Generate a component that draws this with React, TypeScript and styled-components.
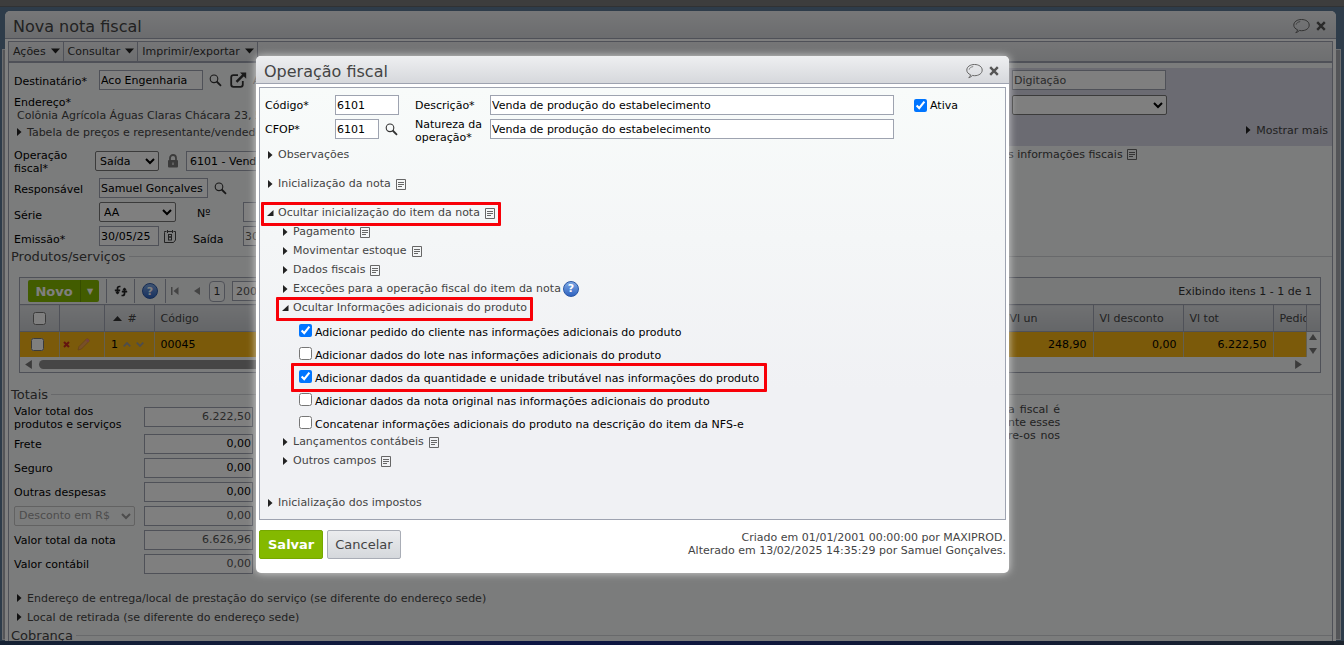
import React from 'react';
import styled, { createGlobalStyle, css } from 'styled-components';

const Global = createGlobalStyle`
  *, *::before, *::after { box-sizing: border-box; }
  html, body, #root { height: 100%; margin: 0; }
  body {
    overflow: hidden;
    font: 11px/13px "DejaVu Sans", Verdana, sans-serif;
    color: #000;
  }
  button, input, select { font: inherit; color: inherit; margin: 0; }
  button { cursor: pointer; }
`;

const edge = '#9ea3b0';

/* ---------- desktop and windows ---------- */

const Desktop = styled.div`
  position: relative;
  display: grid;
  grid-template-rows: 7px minmax(0, 1fr) 4px;
  height: 100vh;
  overflow: hidden;
  background: #5c7894;
`;

const TopStrip = styled.div`
  background: #7a7a7a;
  border-bottom: 1px solid #606468;
`;

const BottomStrip = styled.div`
  background: linear-gradient(90deg, #2c4468, #1c2c88 40%, #22346c 70%, #38485c);
`;

const BackWindow = styled.div`
  position: absolute;
  inset: 49px 3px 5px 2px;
  border: 1px solid #d8dade;
  background: #a8aab0;
`;

const Stage = styled.div`
  padding: 4px 8px 0 5px;
  min-height: 0;
`;

const WindowFrame = styled.section`
  position: relative;
  display: flex;
  flex-direction: column;
  background: #fff;
  border-radius: 5px 5px 0 0;
  height: 100%;
  overflow: hidden;
  padding: 0 3px;
`;

const TitleBar = styled.header`
  display: flex;
  align-items: center;
  gap: 6px;
  flex: none;
  height: 28px;
  margin: 0 -3px 2px;
  padding: 2px 10px 0 8px;
  border-bottom: 1px solid ${edge};
  border-radius: 5px 5px 0 0;
  background: linear-gradient(#eeeff1, #d6d8dc);
`;

const Title = styled.h1`
  flex: 1;
  margin: 0;
  padding-top: 3px;
  font-size: 16px;
  line-height: 20px;
  font-weight: 400;
  color: #444;
`;

const IconButton = styled.button`
  display: inline-flex;
  align-items: center;
  justify-content: center;
  flex: none;
  padding: 0;
  border: 0;
  background: none;
`;

const MainPanel = styled.div`
  flex: 1;
  min-height: 0;
  overflow: hidden;
  border: 1px solid ${edge};
  border-bottom: 0;
  background: #f7f8f8;
`;

/* ---------- menu bar ---------- */

const MenuBar = styled.nav`
  display: flex;
  height: 21px;
  border-bottom: 2px solid ${edge};
  background: linear-gradient(#ebecee, #dcdee1);
`;

const MenuButton = styled.button`
  display: flex;
  align-items: center;
  gap: 5px;
  padding: 0 3px 0 4px;
  border: 0;
  border-right: 1px solid ${edge};
  background: none;
  color: #333;
  svg { margin-bottom: 2px; }
`;

/* ---------- form parts ---------- */

const field = css`
  height: 20px;
  border: 1px solid ${edge};
  background: #fff;
  padding: 0 1px;
`;

const TextField = styled.input<{ $w?: number; $right?: boolean; $muted?: boolean; $pad?: number }>`
  ${field}
  flex: none;
  width: ${p => (p.$w ? `${p.$w}px` : '100%')};
  padding: 0 ${p => p.$pad ?? 1}px;
  text-align: ${p => (p.$right ? 'right' : 'left')};
  color: ${p => (p.$muted ? '#555' : '#000')};
`;

const Select = styled.select<{ $w: number }>`
  flex: none;
  width: ${p => p.$w}px;
  height: 20px;
  padding: 0;
  border: 1px solid #767676;
  border-radius: 2px;
  background-color: #fff;
  &:disabled { opacity: 1; color: #9a9a9a; border-color: #c4c4c4; background-color: #f7f8f8; }
`;

const FormArea = styled.div`
  display: flex;
  justify-content: space-between;
  padding-top: 5px;
`;

const FormColumn = styled.div`
  flex: 1;
  min-width: 0;
  padding-left: 5px;
`;

const Row = styled.div<{ $before?: number; $after?: number }>`
  display: flex;
  align-items: center;
  height: 24px;
  margin-top: ${p => p.$before ?? 0}px;
  margin-bottom: ${p => p.$after ?? 0}px;
`;

const Label = styled.label<{ $w: number; $low?: boolean }>`
  flex: none;
  width: ${p => p.$w}px;
  padding-top: ${p => (p.$low ? 6 : 2)}px;
`;

const Gap = styled.span<{ $w: number }>`
  flex: none;
  display: inline-flex;
  align-items: center;
  justify-content: center;
  width: ${p => p.$w}px;
`;

const FadedLink = styled.a`
  padding-left: 4px;
  color: #8a8a8a;
  text-decoration: none;
`;

const Address = styled.p`
  margin: 0;
  padding-left: 3px;
  color: #444;
  white-space: nowrap;
`;

const FieldTitle = styled.p`
  margin: 4px 0 0;
`;

const Disclosure = styled.button<{ $indent?: number; $before?: number; $h?: number; $mark?: boolean; $padRight?: number }>`
  position: relative;
  display: flex;
  align-items: center;
  width: fit-content;
  height: ${p => p.$h ?? 19}px;
  margin: ${p => p.$before ?? 0}px 0 0 ${p => p.$indent ?? 0}px;
  padding: 0 ${p => p.$padRight ?? 0}px 0 0;
  border: 0;
  background: none;
  color: #444;
  white-space: nowrap;
  ${p => p.$mark && css`
    &::after {
      content: "";
      position: absolute;
      inset: -1px 0 -4px -6px;
      border: 3px solid #f80008;
      border-radius: 1px;
    }
  `}
`;

const StatusPanel = styled.aside`
  display: flex;
  flex-direction: column;
  width: 324px;
  flex: none;
`;

const StatusBox = styled.div`
  display: flex;
  flex-direction: column;
  gap: 5px;
  height: 78px;
  padding: 2px 4px;
  background: #d6d6e4;
`;

const PushRight = styled.div`
  align-self: flex-end;
`;

const FiscalNote = styled.p`
  display: flex;
  align-items: center;
  gap: 4px;
  margin: 2px 0 0;
  color: #444;
`;

const Legend = styled.h2<{ $before: number }>`
  display: flex;
  align-items: center;
  gap: 3px;
  height: 15px;
  margin: ${p => p.$before}px 0 0;
  padding-left: 2px;
  font-size: 13px;
  line-height: 15px;
  font-weight: 400;
  color: #444;
  &::after { content: ""; flex: 1; height: 1px; background: #d0d2d6; }
`;

/* ---------- item grid ---------- */

const GridBox = styled.div`
  margin: 13px 11px 0 10px;
  border: 1px solid ${edge};
`;

const GridTools = styled.div`
  display: flex;
  align-items: center;
  height: 26px;
  padding: 0 8px;
  color: #333;
  background: #f1f2f3;
`;

const GreenSplit = styled.div`
  display: flex;
  height: 22px;
  border-radius: 2px;
  background: #84b800;
  color: #fff;
`;

const SplitPart = styled.button<{ $w: number }>`
  display: flex;
  align-items: center;
  justify-content: center;
  width: ${p => p.$w}px;
  padding: 0;
  border: 0;
  background: none;
  font-size: 13px;
  font-weight: 700;
  & + & { border-left: 1px solid #6d9a00; font-size: 8px; }
`;

const ToolCell = styled.span<{ $w: number; $line?: boolean }>`
  display: flex;
  align-items: center;
  justify-content: center;
  width: ${p => p.$w}px;
  height: 24px;
  border-right: ${p => (p.$line ? `1px solid ${edge}` : '0')};
`;

const PageButton = styled.button`
  width: 16px;
  height: 21px;
  margin-right: 7px;
  padding: 0;
  border: 1px solid ${edge};
  border-radius: 4px;
  background: #f7f8f8;
`;

const GridCount = styled.span`
  margin-left: auto;
`;

const Table = styled.table`
  width: 100%;
  table-layout: fixed;
  border-collapse: collapse;
`;

const Th = styled.th`
  height: 27px;
  padding: 0 0 0 6px;
  border: solid ${edge};
  border-width: 1px 1px 1px 0;
  background: linear-gradient(#e0e2e5, #c9ccd0);
  font-weight: 400;
  text-align: left;
  color: #444;
  white-space: nowrap;
  overflow: hidden;
  &:last-child { border-right: 0; }
`;

const Td = styled.td<{ $right?: boolean; $tight?: boolean }>`
  height: 25px;
  padding: 0 6px 0 ${p => (p.$tight ? 3 : 6)}px;
  border-right: 1px solid #c8c0a0;
  background: #f6b414;
  text-align: ${p => (p.$right ? 'right' : 'left')};
  white-space: nowrap;
`;

const ScrollCell = styled.td`
  padding: 0;
  background: #f7f8f8;
`;

const ScrollArrows = styled.div`
  display: flex;
  flex-direction: column;
  align-items: center;
  gap: 6px;
`;

const CellTools = styled.div<{ $gap: number }>`
  display: flex;
  align-items: center;
  gap: ${p => p.$gap}px;
`;

const ScrollTrack = styled.div`
  display: flex;
  align-items: center;
  gap: 6px;
  height: 15px;
  padding: 0 17px 0 4px;
`;

const ScrollThumb = styled.div`
  width: 70%;
  height: 9px;
  margin-right: auto;
  border-radius: 5px;
  background: #8c8c8c;
`;

const Check = styled.input.attrs({ type: 'checkbox' })`
  flex: none;
  width: 13px;
  height: 13px;
`;

/* ---------- totals ---------- */

const TotalsArea = styled.div`
  display: flex;
  justify-content: space-between;
  padding: 1px 272px 0 5px;
`;

const HelpText = styled.p`
  width: 52px;
  margin: 0;
  color: #444;
  text-align: justify;
  text-align-last: justify;
`;

const Line = styled.span`
  display: block;
  white-space: nowrap;
`;

/* ---------- dialog ---------- */

const Overlay = styled.div`
  position: absolute;
  inset: 0;
  padding: 56px 335px 0 256px;
  background: rgba(0, 0, 0, 0.5);
`;

const Dialog = styled.section`
  padding: 0 3px 14px;
  border-radius: 5px;
  background: #fff;
  box-shadow: 0 0 8px rgba(255, 255, 255, 0.7);
`;

const DialogPanel = styled.div`
  margin-top: 3px;
  height: 433px;
  padding: 5px 5px 0 7px;
  border: 1px solid ${edge};
  background: linear-gradient(#f8fbfa, #f0f1f4 70%);
`;

const DialogFields = styled.div`
  display: grid;
  grid-template-columns: 70px 80px 75px minmax(0, 404px) 1fr;
  grid-template-rows: 24px 24px;
  align-items: center;
  margin: 0 0 4px -2px;
`;

const TwoLineLabel = styled.label`
  padding-top: 4px;
`;

const Inline = styled.div`
  display: flex;
  align-items: center;
  gap: 6px;
`;

const CheckLabel = styled.label<{ $mark?: boolean }>`
  position: relative;
  display: flex;
  align-items: center;
  gap: 3px;
  width: fit-content;
  height: 23px;
  margin-left: 32px;
  padding-top: 7px;
  white-space: nowrap;
  ${Check} { margin-bottom: 4px; }
  ${p => p.$mark && css`
    &::after {
      content: "";
      position: absolute;
      inset: 0 -8px -6px -8px;
      border: 3px solid #f80008;
      border-radius: 1px;
    }
  `}
`;

const ActiveLabel = styled.label`
  display: flex;
  align-items: center;
  gap: 3px;
  padding-left: 20px;
`;

const DialogFooter = styled.footer`
  display: flex;
  align-items: flex-start;
  gap: 4px;
  padding-top: 10px;
`;

const ActionButton = styled.button<{ $primary?: boolean }>`
  height: 29px;
  padding: 0 ${p => (p.$primary ? 8 : 7)}px;
  border: 1px solid ${p => (p.$primary ? '#76a800' : '#a9adb6')};
  border-radius: 2px;
  background: ${p => (p.$primary ? '#84b900' : 'linear-gradient(#ebecee, #d5d8dc)')};
  color: ${p => (p.$primary ? '#fff' : '#444')};
  font-size: 13px;
  font-weight: ${p => (p.$primary ? 700 : 400)};
`;

const Audit = styled.p`
  margin: 1px 0 0 auto;
  color: #444;
  text-align: right;
`;

/* ---------- icons ---------- */

const Bubble = () => (
  <svg width="17" height="16" viewBox="0 0 17 16" fill="none" stroke="#666" strokeWidth="1">
    <path d="M4.600 11.800C2.300 10.900.800 9.200.800 7.100.800 3.700 4.200 1.500 8.500 1.500s7.700 2.200 7.700 5.600-3.400 5.600-7.700 5.600c-.8 0-1.500-.1-2.200-.2-.8 1-2 1.800-3.500 2.200.9-.8 1.500-1.600 1.800-2.900z" />
    <path d="M3.200 6.600c.2-1.500 1.700-2.700 4-3" strokeWidth=".8" />
  </svg>
);

const Close = () => (
  <svg width="10" height="10" viewBox="0 0 10 10" stroke="#555" strokeWidth="2.400">
    <path d="M1.200 1.200l7.600 7.600M8.800 1.200L1.200 8.800" />
  </svg>
);

const Caret = () => (
  <svg width="9" height="6" viewBox="0 0 9 6"><path d="M0 .500h9L4.500 5.500z" fill="#222" /></svg>
);

const Doc = () => (
  <svg width="10" height="11" viewBox="0 0 10 11" fill="none" stroke="#666">
    <path d="M.5.500h9v10h-9zM2 3.500h6M2 5.500h6M2 7.500h4" />
  </svg>
);

const Lens = () => (
  <svg width="13" height="13" viewBox="0 0 13 13" fill="none" stroke="#333">
    <circle cx="5" cy="4.800" r="3.800" strokeWidth="1.100" />
    <path d="M7.700 7.500l4.300 4.300" strokeWidth="1.800" />
  </svg>
);

const External = () => (
  <svg width="17" height="16" viewBox="0 0 17 16" fill="none" stroke="#333" strokeWidth="2">
    <path d="M8 3.200H3.500Q1.200 3.200 1.200 5.500v7Q1.200 14.800 3.500 14.800h7q2.300 0 2.300-2.300V9" strokeWidth="1.800" />
    <path d="M6.500 9.800L14 2.300" strokeWidth="2.400" />
    <path d="M10 .500h6.200v6.200z" fill="#333" stroke="none" />
  </svg>
);

const Lock = () => (
  <svg width="12" height="14" viewBox="0 0 12 14">
    <path d="M3 6V4a3 3 0 0 1 6 0v2" fill="none" stroke="#777" strokeWidth="1.800" />
    <rect x="1" y="6" width="10" height="7.500" rx="1" fill="#777" />
    <path d="M6 8.500v2.500" stroke="#ddd" strokeWidth="1.400" />
  </svg>
);

const Calendar = () => (
  <svg width="12" height="13" viewBox="0 0 12 13" fill="none" stroke="#444">
    <path d="M.5 2.500v-1h2M4 1.500h4M9.500 1.500h2v8.500l-2 2.500h-9v-10M3.500 0v3M8.500 0v3" />
    <rect x="4.500" y="4.500" width="3" height="2.500" />
    <rect x="4.500" y="7" width="3" height="3" />
  </svg>
);

const Refresh = () => (
  <svg width="14" height="12" viewBox="0 0 14 12" fill="none" stroke="#222" strokeWidth="1.700">
    <path d="M6.500 1.500H5.500q-2 0-2 2V9M7.500 10.500h1q2 0 2-2V3" />
    <path d="M.8 5.200h5.400M7.800 6.800h5.400" strokeWidth="1.400" />
    <path d="M1 6.500h5L3.500 9.500zM8 5.500h5l-2.500-3z" fill="#222" stroke="none" />
  </svg>
);

const HelpDot = styled.span`
  display: inline-flex;
  align-items: center;
  justify-content: center;
  width: 16px;
  height: 16px;
  border-radius: 50%;
  border: 1px solid #2a57a5;
  background: linear-gradient(#7ea8e4, #2f63c0);
  color: #fff;
  font-weight: 700;
`;

const Arrow = ({ dir, color = '#333', size = 8 }: { dir: 'up' | 'down' | 'left' | 'right'; color?: string; size?: number }) => {
  const d = { up: 'M4 1l4 6H0z', down: 'M0 1h8L4 7z', left: 'M7 0v8L1 4z', right: 'M1 0v8l6-4z' }[dir];
  return <svg width={size} height={size} viewBox="0 0 8 8"><path d={d} fill={color} /></svg>;
};

const SortArrow = () => (
  <svg width="9" height="5" viewBox="0 0 9 5"><path d="M4.500 0L9 5H0z" fill="#333" /></svg>
);

const FirstPage = () => (
  <svg width="8" height="8" viewBox="0 0 8 8" fill="#888"><path d="M0 0h1.500v8H0zM7.500 0v8L2.500 4z" /></svg>
);

const RowCross = () => (
  <svg width="7" height="7" viewBox="0 0 7 7" stroke="#c8281e" strokeWidth="2"><path d="M1 1l5 5M6 1L1 6" /></svg>
);

const Pencil = () => (
  <svg width="13" height="13" viewBox="0 0 13 13">
    <path d="M1 12l1-3.500 7.500-7.500q1-.6 2 .400t.4 2L4.400 11z" fill="#f0a050" stroke="#c07830" strokeWidth=".6" />
    <path d="M9.500 1q1-.6 2 .400t.4 2l-1 1-2.400-2.400z" fill="#e88080" />
  </svg>
);

const Chevron = ({ up }: { up?: boolean }) => (
  <svg width="8" height="5" viewBox="0 0 8 5" fill="none" stroke="#9a9a9a" strokeWidth="1.800">
    <path d={up ? 'M.7 4.300L4 1l3.300 3.300' : 'M.7.700L4 4l3.300-3.300'} />
  </svg>
);

const MarkSlot = styled.span`
  display: inline-flex;
  flex: none;
  width: 11px;
`;

const DocSlot = styled.span`
  display: inline-flex;
  padding: 2px 0 0 5px;
`;

const HelpSlot = styled.span`
  display: inline-flex;
  padding-left: 2px;
`;

const Marker = ({ open }: { open?: boolean }) => (
  <MarkSlot>
    <svg width="7" height="8" viewBox="0 0 7 8" fill="#222">
      <path d={open ? 'M6.500 1v6H0z' : 'M1 0l4.500 4L1 8z'} />
    </svg>
  </MarkSlot>
);

type ItemProps = {
  text: string; open?: boolean; doc?: boolean; help?: boolean;
  indent?: number; before?: number; mark?: boolean; padRight?: number;
};

const Item = ({ text, open, doc, help, indent, before, mark, padRight }: ItemProps) => (
  <Disclosure type="button" aria-expanded={!!open} $indent={indent} $before={before} $mark={mark} $padRight={padRight}>
    <Marker open={open} />
    {text}
    {doc && <DocSlot><Doc /></DocSlot>}
    {help && <HelpSlot><HelpDot>?</HelpDot></HelpSlot>}
  </Disclosure>
);

const totals = [
  { id: 'frete', label: 'Frete', value: '0,00' },
  { id: 'seguro', label: 'Seguro', value: '0,00' },
  { id: 'outras', label: 'Outras despesas', value: '0,00' },
  { id: 'desconto', label: '', value: '0,00', muted: true },
  { id: 'total', label: 'Valor total da nota', value: '6.626,96', muted: true },
  { id: 'contabil', label: 'Valor contábil', value: '0,00', muted: true },
];

const options = [
  { text: 'Adicionar pedido do cliente nas informações adicionais do produto', on: true },
  { text: 'Adicionar dados do lote nas informações adicionais do produto', on: false },
  { text: 'Adicionar dados da quantidade e unidade tributável nas informações do produto', on: true, mark: true },
  { text: 'Adicionar dados da nota original nas informações adicionais do produto', on: false },
  { text: 'Concatenar informações adicionais do produto na descrição do item da NFS-e', on: false },
];

const InvoiceWindow = () => (
  <WindowFrame>
    <TitleBar>
      <Title>Nova nota fiscal</Title>
      <IconButton aria-label="Comentários"><Bubble /></IconButton>
      <IconButton aria-label="Fechar"><Close /></IconButton>
    </TitleBar>
    <MainPanel>
      <MenuBar>
        <MenuButton>Ações <Caret /></MenuButton>
        <MenuButton>Consultar <Caret /></MenuButton>
        <MenuButton>Imprimir/exportar <Caret /></MenuButton>
      </MenuBar>
      <FormArea>
        <FormColumn>
          <Row>
            <Label htmlFor="dest" $w={85}>Destinatário*</Label>
            <TextField id="dest" $w={104} defaultValue="Aco Engenharia" />
            <Gap $w={24}><Lens /></Gap>
            <Gap $w={22}><External /></Gap>
            <FadedLink href="#abrir">A</FadedLink>
          </Row>
          <FieldTitle>Endereço*</FieldTitle>
          <Address>Colônia Agrícola Águas Claras Chácara 23, 5</Address>
          <Disclosure $indent={2} $h={20}><Marker />Tabela de preços e representante/vendedor</Disclosure>
          <Row $before={7} $after={3}>
            <Label htmlFor="op" $w={81}>Operação<br />fiscal*</Label>
            <Select id="op" $w={64}><option>Saída</option></Select>
            <Gap $w={27}><Lock /></Gap>
            <TextField aria-label="Operação" $w={400} $pad={3} defaultValue="6101 - Venda de produção do estabelecimento" />
          </Row>
          <Row>
            <Label htmlFor="resp" $w={85}>Responsável</Label>
            <TextField id="resp" $w={109} defaultValue="Samuel Gonçalves" />
            <Gap $w={24}><Lens /></Gap>
          </Row>
          <Row>
            <Label htmlFor="serie" $w={85} $low>Série</Label>
            <Select id="serie" $w={77}><option>AA</option></Select>
            <Gap $w={21} />
            <Label htmlFor="num" $w={46}>Nº</Label>
            <TextField id="num" $w={60} />
          </Row>
          <Row>
            <Label htmlFor="emis" $w={85} $low>Emissão*</Label>
            <TextField id="emis" $w={60} defaultValue="30/05/25" />
            <Gap $w={22}><Calendar /></Gap>
            <Gap $w={12} />
            <Label htmlFor="said" $w={50} $low>Saída</Label>
            <TextField id="said" $w={60} $muted defaultValue="30/05/25" />
          </Row>
        </FormColumn>
        <StatusPanel>
          <StatusBox>
            <TextField aria-label="Situação" $w={154} $muted defaultValue="Digitação" />
            <Select aria-label="Etapa" $w={155}><option></option></Select>
            <PushRight><Disclosure $h={20}><Marker />Mostrar mais</Disclosure></PushRight>
          </StatusBox>
          <FiscalNote>s informações fiscais <Doc /></FiscalNote>
        </StatusPanel>
      </FormArea>

      <Legend $before={1}>Produtos/serviços</Legend>
      <GridBox>
        <GridTools>
          <GreenSplit>
            <SplitPart $w={52}>Novo</SplitPart>
            <SplitPart $w={19} aria-label="Mais opções">▼</SplitPart>
          </GreenSplit>
          <ToolCell $w={8} $line />
          <ToolCell $w={28} $line><Refresh /></ToolCell>
          <ToolCell $w={31} $line><HelpDot>?</HelpDot></ToolCell>
          <ToolCell $w={18}><FirstPage /></ToolCell>
          <ToolCell $w={25}><Arrow dir="left" color="#888" /></ToolCell>
          <PageButton>1</PageButton>
          <TextField aria-label="Itens por página" $w={50} $pad={3} $muted defaultValue="200" />
          <GridCount>Exibindo itens 1 - 1 de 1</GridCount>
        </GridTools>
        <Table>
          <colgroup>
            <col width={39} /><col width={45} /><col width={50} /><col />
            <col width={90} /><col width={90} /><col width={90} /><col width={33} /><col width={14} />
          </colgroup>
          <thead>
            <tr>
              <Th><CellTools $gap={0}><Gap $w={26}><Check aria-label="Selecionar todos" /></Gap></CellTools></Th>
              <Th />
              <Th><CellTools $gap={3}><Gap $w={14}><SortArrow /></Gap>#</CellTools></Th>
              <Th>Código</Th>
              <Th>Vl un</Th>
              <Th>Vl desconto</Th>
              <Th>Vl tot</Th>
              <Th>Pedido</Th>
              <Th />
            </tr>
          </thead>
          <tbody>
            <tr>
              <Td><CellTools $gap={0}><Gap $w={22}><Check aria-label="Selecionar item" /></Gap></CellTools></Td>
              <Td $tight><CellTools $gap={7}><RowCross /><Pencil /></CellTools></Td>
              <Td $tight><CellTools $gap={5}><span>&nbsp;1</span><Chevron up /><Chevron /></CellTools></Td>
              <Td>00045</Td>
              <Td $right>248,90</Td>
              <Td $right>0,00</Td>
              <Td $right>6.222,50</Td>
              <Td />
              <ScrollCell>
                <ScrollArrows><Arrow dir="up" color="#777" /><Arrow dir="down" color="#777" /></ScrollArrows>
              </ScrollCell>
            </tr>
          </tbody>
        </Table>
        <ScrollTrack>
          <Arrow dir="left" color="#777" size={9} />
          <ScrollThumb />
          <Arrow dir="right" color="#777" size={9} />
        </ScrollTrack>
      </GridBox>

      <Legend $before={14}>Totais</Legend>
      <TotalsArea>
        <div>
          <Row $before={2} $after={3}>
            <Label htmlFor="prod" $w={130}>Valor total dos<br />produtos e serviços</Label>
            <TextField id="prod" $w={109} $right $muted defaultValue="6.222,50" />
          </Row>
          {totals.map(t => (
            <Row key={t.id}>
              {t.label
                ? <Label htmlFor={t.id} $w={130}>{t.label}</Label>
                : <><Select aria-label="Tipo de desconto" $w={121} disabled><option>Desconto em R$</option></Select><Gap $w={9} /></>}
              <TextField id={t.id} $w={109} $right $muted={t.muted} defaultValue={t.value} />
            </Row>
          ))}
        </div>
        <HelpText><Line>a fiscal é</Line><Line>nte esses</Line><Line>re-os nos</Line></HelpText>
      </TotalsArea>
      <Disclosure $indent={7} $before={13}><Marker />Endereço de entrega/local de prestação do serviço (se diferente do endereço sede)</Disclosure>
      <Disclosure $indent={7}><Marker />Local de retirada (se diferente do endereço sede)</Disclosure>
      <Legend $before={1}>Cobrança</Legend>
    </MainPanel>
  </WindowFrame>
);

const OperationDialog = () => (
  <Dialog role="dialog" aria-label="Operação fiscal">
    <TitleBar>
      <Title>Operação fiscal</Title>
      <IconButton aria-label="Comentários"><Bubble /></IconButton>
      <IconButton aria-label="Fechar"><Close /></IconButton>
    </TitleBar>
    <DialogPanel>
      <DialogFields>
        <label htmlFor="codigo">Código*</label>
        <TextField id="codigo" $w={64} defaultValue="6101" />
        <label htmlFor="desc">Descrição*</label>
        <TextField id="desc" defaultValue="Venda de produção do estabelecimento" />
        <ActiveLabel><Check defaultChecked />Ativa</ActiveLabel>
        <label htmlFor="cfop">CFOP*</label>
        <Inline><TextField id="cfop" $w={44} defaultValue="6101" /><Lens /></Inline>
        <TwoLineLabel htmlFor="nat">Natureza da<br />operação*</TwoLineLabel>
        <TextField id="nat" defaultValue="Venda de produção do estabelecimento" />
      </DialogFields>
      <Item text="Observações" />
      <Item text="Inicialização da nota" doc before={10} />
      <Item text="Ocultar inicialização do item da nota" doc open before={10} mark padRight={6} />
      <Item text="Pagamento" doc indent={15} />
      <Item text="Movimentar estoque" doc indent={15} />
      <Item text="Dados fiscais" doc indent={15} />
      <Item text="Exceções para a operação fiscal do item da nota" help indent={15} />
      <Item text="Ocultar Informações adicionais do produto" open indent={15} mark padRight={6} />
      {options.map(o => (
        <CheckLabel key={o.text} $mark={o.mark}><Check defaultChecked={o.on} />{o.text}</CheckLabel>
      ))}
      <Item text="Lançamentos contábeis" doc indent={15} />
      <Item text="Outros campos" doc indent={15} />
      <Item text="Inicialização dos impostos" before={23} />
    </DialogPanel>
    <DialogFooter>
      <ActionButton $primary>Salvar</ActionButton>
      <ActionButton>Cancelar</ActionButton>
      <Audit>
        Criado em 01/01/2001 00:00:00 por MAXIPROD.<br />
        Alterado em 13/02/2025 14:35:29 por Samuel Gonçalves.
      </Audit>
    </DialogFooter>
  </Dialog>
);

export default function App() {
  return (
    <>
      <Global />
      <Desktop>
        <BackWindow />
        <TopStrip />
        <Stage><InvoiceWindow /></Stage>
        <BottomStrip />
        <Overlay><OperationDialog /></Overlay>
      </Desktop>
    </>
  );
}
